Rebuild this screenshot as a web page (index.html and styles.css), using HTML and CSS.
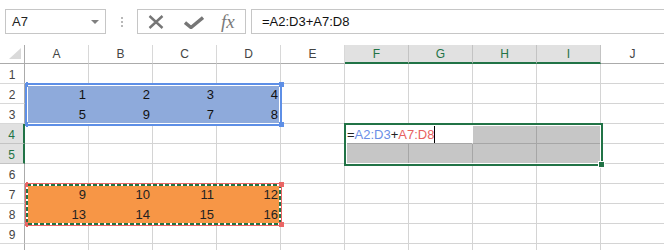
FILE: index.html
```html
<!DOCTYPE html>
<html lang="en">
<head>
  <meta charset="UTF-8">
  <title>Sheet1</title>
  <link rel="stylesheet" href="styles.css">
</head>
<body>
  <div class="toolbar">
    <div class="name-box">
      <span>A7</span>
      <span class="drop"></span>
    </div>
    <div class="grip"><i></i><i></i><i></i></div>
    <div class="buttons">
      <svg class="icon-x" width="16" height="14" viewBox="0 0 16 14">
        <path d="M1.5 1 L14.5 13 M14.5 1 L1.5 13" stroke="#767676" stroke-width="2.4" fill="none"/>
      </svg>
      <svg class="icon-ok" width="20" height="13" viewBox="0 0 20 13">
        <path d="M1 6.5 L7 11.5 L19 1.5" stroke="#767676" stroke-width="3.4" fill="none" stroke-linejoin="miter"/>
      </svg>
      <span class="fx">fx</span>
    </div>
    <div class="formula">=A2:D3+A7:D8</div>
  </div>

  <div class="sheet">
    <div class="corner"></div>
    <div class="h">A</div><div class="h">B</div><div class="h">C</div><div class="h">D</div><div class="h">E</div>
    <div class="h sel">F</div><div class="h sel">G</div><div class="h sel">H</div><div class="h sel">I</div><div class="h">J</div>

    <div class="r">1</div>
    <div class="c"></div><div class="c"></div><div class="c"></div><div class="c"></div><div class="c"></div>
    <div class="c"></div><div class="c"></div><div class="c"></div><div class="c"></div><div class="c"></div>

    <div class="r">2</div>
    <div class="c blue">1</div><div class="c blue">2</div><div class="c blue">3</div><div class="c blue">4</div><div class="c"></div>
    <div class="c"></div><div class="c"></div><div class="c"></div><div class="c"></div><div class="c"></div>

    <div class="r">3</div>
    <div class="c blue">5</div><div class="c blue">9</div><div class="c blue">7</div><div class="c blue">8</div><div class="c"></div>
    <div class="c"></div><div class="c"></div><div class="c"></div><div class="c"></div><div class="c"></div>

    <div class="r sel">4</div>
    <div class="c"></div><div class="c"></div><div class="c"></div><div class="c"></div><div class="c"></div>
    <div class="c edit"><span class="dark">=</span><span class="ref-a">A2:D3</span><span class="dark">+</span><span class="ref-b">A7:D8</span><span class="caret"></span></div>
    <div class="c gray"></div><div class="c gray"></div><div class="c"></div>

    <div class="r sel">5</div>
    <div class="c"></div><div class="c"></div><div class="c"></div><div class="c"></div><div class="c"></div>
    <div class="c gray"></div><div class="c gray"></div><div class="c gray"></div><div class="c gray"></div><div class="c"></div>

    <div class="r">6</div>
    <div class="c"></div><div class="c"></div><div class="c"></div><div class="c"></div><div class="c"></div>
    <div class="c"></div><div class="c"></div><div class="c"></div><div class="c"></div><div class="c"></div>

    <div class="r">7</div>
    <div class="c orange">9</div><div class="c orange">10</div><div class="c orange">11</div><div class="c orange">12</div><div class="c"></div>
    <div class="c"></div><div class="c"></div><div class="c"></div><div class="c"></div><div class="c"></div>

    <div class="r">8</div>
    <div class="c orange">13</div><div class="c orange">14</div><div class="c orange">15</div><div class="c orange">16</div><div class="c"></div>
    <div class="c"></div><div class="c"></div><div class="c"></div><div class="c"></div><div class="c"></div>

    <div class="r">9</div>
    <div class="c"></div><div class="c"></div><div class="c"></div><div class="c"></div><div class="c"></div>
    <div class="c"></div><div class="c"></div><div class="c"></div><div class="c"></div><div class="c"></div>

    <!-- last row is only partly in view -->
    <div class="r"></div>
    <div class="c"></div><div class="c"></div><div class="c"></div><div class="c"></div><div class="c"></div>
    <div class="c"></div><div class="c"></div><div class="c"></div><div class="c"></div><div class="c"></div>

    <!-- range highlights drawn over the grid -->
    <div class="range-blue"></div>
    <div class="handle blue-h tl"></div>
    <div class="handle blue-h tr"></div>
    <div class="handle blue-h bl"></div>
    <div class="handle blue-h br"></div>

    <div class="range-copy">
      <svg width="100%" height="100%">
        <rect x="1" y="1" width="253" height="39" fill="none" stroke="#fff" stroke-width="2"/>
        <rect x="1" y="1" width="253" height="39" fill="none" stroke="#217346" stroke-width="2" stroke-dasharray="4 2"/>
      </svg>
    </div>
    <div class="handle red-h tl2"></div>
    <div class="handle red-h tr2"></div>
    <div class="handle red-h bl2"></div>
    <div class="handle red-h br2"></div>

    <div class="selection"></div>
    <div class="fill-handle"></div>
  </div>
</body>
</html>
```

FILE: styles.css
```css
body {
  margin: 0;
  background-color: #fff;
  font-family: "Liberation Sans", Arial, sans-serif;
  color: #222;
  overflow: hidden;
  width: 664px;
  height: 250px;
}

.toolbar {
  height: 45px;
  box-sizing: border-box;
  padding: 9px 0 0 5px;
  display: flex;
  align-items: flex-start;
}

.name-box {
  width: 101px;
  height: 25px;
  box-sizing: border-box;
  border: 1px solid #c6c6c6;
  display: flex;
  align-items: center;
  justify-content: space-between;
  padding: 0 6px 0 6px;
  font-size: 13px;
  color: #222;
}

.drop {
  width: 0;
  height: 0;
  border-left: 4px solid transparent;
  border-right: 4px solid transparent;
  border-top: 4px solid #808080;
  margin-top: 1px;
}

.grip {
  margin: 8px 0 0 15px;
  display: flex;
  flex-direction: column;
  gap: 2px;
}

.grip i {
  display: block;
  width: 2px;
  height: 2px;
  background-color: #b8b8b8;
}

.buttons {
  margin-left: 14px;
  width: 109px;
  height: 25px;
  box-sizing: border-box;
  border: 1px solid #c6c6c6;
  display: flex;
  align-items: center;
  padding-left: 10px;
}

.icon-ok {
  margin-left: 20px;
  margin-top: 2px;
}

.fx {
  margin-left: 17px;
  font-family: "Liberation Serif", serif;
  font-style: italic;
  font-size: 19px;
  color: #7a7a7a;
  line-height: 20px;
}

.formula {
  flex: 1;
  margin-left: 5px;
  height: 25px;
  box-sizing: border-box;
  border-top: 1px solid #c6c6c6;
  border-bottom: 1px solid #c6c6c6;
  border-left: 1px solid #c6c6c6;
  padding-left: 10px;
  font-size: 13px;
  line-height: 23px;
  color: #111;
}

/* grid */
.sheet {
  position: relative;
  display: grid;
  grid-template-columns: 25px repeat(10, 64px);
  grid-template-rows: 19px repeat(10, 20px);
}

.corner {
  border-right: 1px solid #ababab;
  border-bottom: 1px solid #ababab;
  position: relative;
}

.corner::after {
  content: "";
  position: absolute;
  right: 3px;
  bottom: 4px;
  width: 0;
  height: 0;
  border-left: 12px solid transparent;
  border-bottom: 11px solid #dadada;
}

.h {
  box-sizing: border-box;
  border-right: 1px solid #d8d8d8;
  border-bottom: 1px solid #ababab;
  text-align: center;
  font-size: 12px;
  line-height: 17px;
  padding-top: 1px;
  color: #444;
}

.h.sel {
  background-color: #e1e1e1;
  color: #217346;
  border-right-color: #c3c3c3;
  border-bottom: 2px solid #217346;
}

.r {
  box-sizing: border-box;
  border-right: 1px solid #ababab;
  border-bottom: 1px solid #d8d8d8;
  text-align: center;
  font-size: 12px;
  line-height: 16px;
  padding-top: 3px;
  color: #444;
}

.r.sel {
  background-color: #e1e1e1;
  color: #217346;
  border-right: 2px solid #217346;
  border-bottom-color: #c3c3c3;
}

.c {
  box-sizing: border-box;
  border-right: 1px solid #d4d4d4;
  border-bottom: 1px solid #d4d4d4;
  text-align: right;
  padding: 3px 2px 0 0;
  font-size: 13px;
  line-height: 16px;
  color: #111;
}

.c.blue {
  background-color: #8eaadb;
  border-color: #8eaadb;
}

.c.orange {
  background-color: #f79646;
  border-color: #f79646;
  color: #222;
}

.c.gray {
  background-color: #c6c6c6;
  border-color: #a6a6a6;
}

.c.edit {
  grid-column: span 2;
  text-align: left;
  padding-left: 2px;
  background-color: #fff;
  border-right-color: #fff;
  border-bottom-color: #a6a6a6;
  display: flex;
  align-items: flex-start;
  white-space: nowrap;
}

.dark { color: #222; }
.ref-a { color: #6a8ee6; }
.ref-b { color: #e8615f; }

.caret {
  display: inline-block;
  width: 1px;
  height: 19px;
  margin-top: -3px;
  background-color: #000;
}

/* overlays */
.range-blue {
  position: absolute;
  left: 25px;
  top: 38px;
  width: 257px;
  height: 43px;
  box-sizing: border-box;
  border: 2px solid #5e8fe6;
  box-shadow: inset 0 0 0 1px #fff;
}

.handle {
  position: absolute;
  width: 5px;
  height: 5px;
}

.blue-h { background-color: #5e8fe6; }
.red-h { background-color: #ea6665; }

.tl, .bl, .tl2, .bl2 { left: 26px; width: 2px; }
.tr, .br, .tr2, .br2 { left: 279px; }
.tl, .tr { top: 37px; }
.bl, .br { top: 77px; }
.tl2, .tr2 { top: 137px; }
.bl2, .br2 { top: 177px; }

.range-copy {
  position: absolute;
  left: 25px;
  top: 138px;
  width: 257px;
  height: 43px;
  box-sizing: border-box;
  border: 1px solid #ea6665;
}

.range-copy svg {
  display: block;
}

.selection {
  position: absolute;
  left: 344px;
  top: 78px;
  width: 259px;
  height: 43px;
  box-sizing: border-box;
  border: 2px solid #217346;
  box-shadow: inset 0 0 0 1px #fff;
}

.fill-handle {
  position: absolute;
  left: 598px;
  top: 116px;
  width: 5px;
  height: 5px;
  background-color: #217346;
  border: 1px solid #fff;
}
```
